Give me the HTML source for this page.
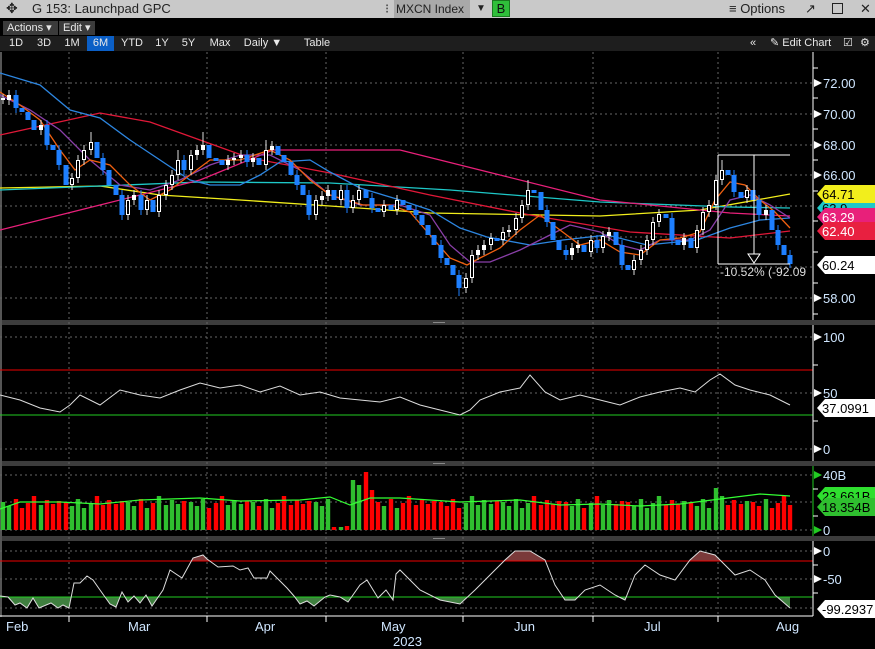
<!DOCTYPE html>
<html><head><meta charset="utf-8"><style>
*{margin:0;padding:0;box-sizing:border-box}
body{width:875px;height:649px;background:#000;overflow:hidden;font-family:"Liberation Sans",sans-serif;position:relative;color:#fff}
.top{position:absolute;left:0;top:0;width:875px;height:18px;background:#c9c9c9;color:#222;font-size:13px}
.top span{position:absolute;top:1px;white-space:nowrap}
.bar2{position:absolute;left:0;top:21px;height:14px;width:875px;background:#000}
.btn{position:absolute;top:0;height:14px;background:#3b3b3b;color:#e8e8e8;font-size:11px;line-height:14px;padding-left:4px}
.bar3{position:absolute;left:0;top:36px;height:15px;width:875px;background:#1e1e1e;font-size:11px;color:#e8e8e8}
.bar3 span{position:absolute;top:0;line-height:15px;text-align:center;white-space:nowrap}
svg{position:absolute;left:0;top:0}
</style></head><body>
<div class="top">
<span style="left:6px;top:0;font-size:14px">✥</span>
<span style="left:32px">G 153: Launchpad GPC</span>
<span style="left:385px;color:#333">⁝</span>
<span style="left:394px;top:0;height:18px;width:76px;background:#a9a9a9;padding:2px 2px;font-size:12px;overflow:hidden">MXCN Index</span>
<span style="left:476px;font-size:10px;top:3px">▼</span>
<span style="left:492px;top:0;width:18px;height:17px;background:#2fbf3a;border:1px solid #1a7a20;text-align:center;color:#111">B</span>
<span style="left:729px">≡ Options</span>
<span style="left:805px">↗</span>
<span style="left:832px;top:3px;width:11px;height:11px;border:1px solid #222"></span>
<span style="left:860px">✕</span>
</div>
<div class="bar2"><div class="btn" style="left:3px;width:55px">Actions ▾</div><div class="btn" style="left:59px;width:36px">Edit ▾</div></div>
<div class="bar3">
<span style="left:3px;width:26px">1D</span><span style="left:30px;width:28px">3D</span><span style="left:58px;width:28px">1M</span>
<span style="left:87px;width:27px;background:#0b5fc6">6M</span><span style="left:115px;width:34px">YTD</span><span style="left:149px;width:26px">1Y</span>
<span style="left:175px;width:27px">5Y</span><span style="left:203px;width:34px">Max</span><span style="left:238px;width:50px">Daily ▼</span>
<span style="left:292px;width:50px">Table</span>
<span style="left:750px">«</span><span style="left:770px">✎ Edit Chart</span><span style="left:843px">☑</span><span style="left:860px">⚙</span>
</div>
<svg width="875" height="649" viewBox="0 0 875 649">
<defs>
<clipPath id="cg"><rect x="0" y="597" width="813" height="20"/></clipPath>
<clipPath id="cr"><rect x="0" y="541" width="813" height="20"/></clipPath>
</defs>
<rect x="0" y="320" width="875" height="5" fill="#3c3c3c"/><rect x="433" y="322" width="12" height="1" fill="#888"/>
<rect x="0" y="461" width="875" height="5" fill="#3c3c3c"/><rect x="433" y="463" width="12" height="1" fill="#888"/>
<rect x="0" y="536" width="875" height="5" fill="#3c3c3c"/><rect x="433" y="538" width="12" height="1" fill="#888"/>
<rect x="0" y="52" width="2" height="565" fill="#555"/>
<g stroke="#666" stroke-dasharray="2,3">
<path d="M69 52V616M207 52V616M326 52V616M463 52V616M593 52V616M718 52V616"/>
<path d="M0 83H813M0 114H813M0 145H813M0 175H813M0 206H813M0 237H813M0 267H813M0 298H813"/>
<path d="M0 337H813M0 393H813M0 449H813M0 475H813M0 502H813M0 530H813M0 551H813M0 579H813M0 608H813"/>
</g>
<g fill="none" stroke-width="1.3">
<polyline stroke="#f2ee1c" points="0,188 100,186 160,195 240,200 330,206 430,213 600,216 700,210 790,194"/>
<polyline stroke="#1ec8c8" points="0,190 100,186 200,182 330,183 450,190 600,202 730,207 790,208"/>
<polyline stroke="#e8207a" points="0,230 100,205 200,180 273,150 330,150 400,150 500,175 600,200 730,213 790,216"/>
<polyline stroke="#e01838" points="0,135 100,113 150,122 200,140 250,158 330,173 430,195 530,215 630,232 730,238 790,231"/>
<polyline stroke="#2d86e0" points="0,73 40,85 70,110 100,118 130,140 160,160 190,180 210,185 240,185 260,175 280,162 310,160 330,172 360,188 400,200 430,210 460,228 487,237 530,245 563,240 607,235 647,245 697,240 730,228 760,220 790,218"/>
<polyline stroke="#8a3fa8" points="0,95 30,110 60,130 90,160 120,185 150,190 180,180 210,165 240,155 270,155 300,170 330,195 360,205 400,205 430,215 450,245 470,262 490,262 520,250 550,235 570,225 600,232 620,245 640,250 660,240 690,240 710,230 730,200 750,195 770,205 790,218"/>
<polyline stroke="#f06010" points="0,92 20,105 40,120 60,150 75,170 90,160 110,165 130,185 150,200 170,190 190,175 210,160 240,160 270,150 290,160 310,180 330,195 363,205 390,205 410,212 430,235 450,258 467,265 480,258 500,248 520,230 540,215 560,230 580,245 600,240 620,252 640,255 660,240 680,238 700,232 715,200 730,182 745,185 760,200 775,212 790,228"/>
</g>
<path fill="none" stroke="#ddd" stroke-width="1" d="M3 94V104M9 90V105M41 120V135M72 173V190M78 155V183M84 145V165M91 132V155M128 195V220M134 190V205M147 195V215M159 190V217M166 180V200M172 170V190M178 150V180M191 150V175M197 145V160M203 132V155M228 155V170M234 153V165M241 150V163M253 153V167M266 140V170M272 141V155M316 195V220M322 191V205M328 185V201M341 185V205M353 195V213M359 185V205M384 200V217M397 195V215M466 273V293M472 250V283M478 245V260M484 240V255M491 233V250M503 227V245M509 225V237M516 213V235M522 200V223M528 180V210M572 243V260M578 240V253M591 235V257M603 231V253M609 227V241M634 255V275M641 245V265M647 235V255M653 217V245M659 209V227M684 233V250M697 225V253M703 207V235M709 200V217M716 175V210M722 160V185M747 185V203M766 205V220"/>
<path fill="none" stroke="#1e7fff" stroke-width="1" d="M16 90V113M47 120V150M59 145V170M103 153V175M122 190V220M141 190V215M184 155V175M247 150V167M297 170V190M309 190V220M347 185V213M372 193V213M416 205V220M441 240V263M459 270V296M547 205V227M566 245V260M597 235V253M622 240V270M672 213V245M734 170V197M759 195V220M778 225V250M790 250V268"/>
<path fill="none" stroke="#1e7fff" stroke-width="5" d="M16 95V108M22 108V112M28 112V120M34 120V130M47 125V145M53 145V150M59 150V165M66 165V185M97 142V158M103 158V170M109 170V185M116 185V195M122 195V215M141 195V210M153 200V212M184 160V170M209 145V158M216 158V161M222 160V165M247 155V162M259 158V165M278 146V155M284 155V162M291 162V175M297 175V185M303 185V195M309 195V215M334 190V200M347 190V208M366 190V198M372 198V208M378 208V212M391 205V210M403 200V205M409 205V210M416 210V215M422 215V225M428 225V235M434 235V245M441 245V258M447 258V265M453 265V275M459 275V288M497 238V241M534 190V193M541 192V210M547 210V222M553 222V240M559 240V250M566 250V255M584 245V252M597 240V248M616 232V245M622 245V265M628 265V270M666 214V218M672 218V240M678 240V245M691 238V248M728 170V175M734 175V192M741 192V198M753 190V200M759 200V215M772 210V230M778 230V245M784 245V255M790 255V264"/>
<g fill="none">
<path stroke="#fff" stroke-width="4" d="M3 98V100M9 95V100M41 125V130M72 178V185M78 160V178M84 150V160M91 142V150M128 200V215M134 195V200M147 200V210M159 195V212M166 185V195M172 175V185M178 160V175M191 155V170M197 150V155M203 145V150M228 160V165M234 158V160M241 155V158M253 158V162M266 150V165M272 146V150M316 200V215M322 196V200M328 190V196M341 190V200M353 200V208M359 190V200M384 205V212M397 200V210M466 278V288M472 255V278M478 250V255M484 245V250M491 238V245M503 232V240M509 230V232M516 218V230M522 205V218M528 190V205M572 248V255M578 245V248M591 240V252M603 236V248M609 232V236M634 260V270M641 250V260M647 240V250M653 222V240M659 214V222M684 238V245M697 230V248M703 212V230M709 205V212M716 180V205M722 170V180M747 190V198M766 210V215"/>
<path stroke="#000" stroke-width="2" d="M72 179V184M78 161V177M84 151V159M91 143V149M128 201V214M147 201V209M159 196V211M166 186V194M172 176V184M178 161V174M191 156V169M266 151V164M316 201V214M341 191V199M353 201V207M359 191V199M384 206V211M397 201V209M466 279V287M472 256V277M491 239V244M503 233V239M516 219V229M522 206V217M528 191V204M591 241V251M603 237V247M634 261V269M641 251V259M647 241V249M653 223V239M659 215V221M697 231V247M703 213V229M709 206V211M716 181V204M722 171V179M747 191V197"/>
</g>
<path d="M718 155H790M754 155V254M718 264H790M718 155V264" stroke="#fff" fill="none"/>
<polygon points="748,254 760,254 754,263" fill="#000" stroke="#fff"/>
<text x="720" y="276" font-size="12" fill="#ddd">-10.52% (-92.09</text>
<line x1="0" y1="370" x2="813" y2="370" stroke="#e00"/><line x1="0" y1="415" x2="813" y2="415" stroke="#2c2"/>
<polyline fill="none" stroke="#ddd" points="0,395 20,400 40,408 60,412 70,405 80,395 100,405 120,390 140,395 160,398 180,390 200,383 220,388 240,385 260,392 280,386 300,395 320,392 340,398 360,400 380,402 400,397 420,405 440,410 460,415 470,410 480,400 500,392 520,388 530,375 545,392 560,400 580,395 600,400 620,405 640,397 660,392 680,388 695,392 710,380 720,374 735,385 750,390 770,395 790,405"/>
<path fill="none" stroke="#2fbf2f" stroke-width="4.4" d="M3 530V502M9 530V506M41 530V505M72 530V506M78 530V499M84 530V508M91 530V503M128 530V502M134 530V506M147 530V508M159 530V496M166 530V505M172 530V500M178 530V504M191 530V502M197 530V506M203 530V499M228 530V505M234 530V500M241 530V504M253 530V502M266 530V499M272 530V508M316 530V502M322 530V506M328 530V499M341 530V527M353 530V480M359 530V485M384 530V506M397 530V508M466 530V503M472 530V496M478 530V505M484 530V500M491 530V504M503 530V502M509 530V506M516 530V499M522 530V508M528 530V503M572 530V506M578 530V499M591 530V503M603 530V505M609 530V500M634 530V506M641 530V499M647 530V508M653 530V503M659 530V496M684 530V501M697 530V506M703 530V499M709 530V508M716 530V488M722 530V496M747 530V501M766 530V499"/>
<path fill="none" stroke="#f00" stroke-width="4.4" d="M16 530V499M22 530V508M28 530V503M34 530V496M47 530V500M53 530V504M59 530V501M66 530V502M97 530V496M103 530V505M109 530V500M116 530V504M122 530V501M141 530V499M153 530V503M184 530V501M209 530V508M216 530V503M222 530V496M247 530V501M259 530V506M278 530V503M284 530V496M291 530V505M297 530V500M303 530V504M309 530V501M334 530V527M347 530V526M366 530V472M372 530V490M378 530V502M391 530V499M403 530V503M409 530V496M416 530V505M422 530V500M428 530V504M434 530V501M441 530V502M447 530V506M453 530V499M459 530V508M497 530V501M534 530V496M541 530V505M547 530V500M553 530V504M559 530V501M566 530V502M584 530V508M597 530V496M616 530V504M622 530V501M628 530V502M666 530V505M672 530V500M678 530V504M691 530V502M728 530V505M734 530V500M741 530V504M753 530V502M759 530V506M772 530V508M778 530V503M784 530V496M790 530V505"/>
<polyline fill="none" stroke="#3f3" stroke-width="1.2" points="0,509 20,502 60,502 100,504 140,500 200,498 240,501 300,500 330,497 350,505 370,498 400,498 460,502 520,500 560,505 600,504 640,506 680,504 720,499 760,494 790,496"/>
<polygon clip-path="url(#cg)" fill="#3f7f3f" points="0,596 8,597 15,605 20,603 27,608 33,598 39,608 51,603 58,608 63,605 69,608 74,583 80,583 87,576 93,580 100,590 110,604 116,607 122,592 128,602 134,596 140,603 146,595 152,606 163,590 170,570 182,578 193,558 203,555 207,559 218,567 233,566 240,570 248,568 254,578 267,578 270,571 287,588 294,596 300,604 307,601 314,606 325,597 330,595 340,597 348,602 360,585 367,580 378,598 386,590 393,600 396,574 400,570 410,580 420,590 440,600 460,604 475,590 490,575 505,560 515,551 530,551 545,560 555,585 565,600 575,600 585,590 600,585 615,595 625,600 635,575 645,565 660,575 675,580 690,560 700,551 715,555 725,565 735,575 750,570 765,580 775,595 790,608 790,597 0,597"/>
<polygon clip-path="url(#cr)" fill="#7a3a3a" points="0,596 8,597 15,605 20,603 27,608 33,598 39,608 51,603 58,608 63,605 69,608 74,583 80,583 87,576 93,580 100,590 110,604 116,607 122,592 128,602 134,596 140,603 146,595 152,606 163,590 170,570 182,578 193,558 203,555 207,559 218,567 233,566 240,570 248,568 254,578 267,578 270,571 287,588 294,596 300,604 307,601 314,606 325,597 330,595 340,597 348,602 360,585 367,580 378,598 386,590 393,600 396,574 400,570 410,580 420,590 440,600 460,604 475,590 490,575 505,560 515,551 530,551 545,560 555,585 565,600 575,600 585,590 600,585 615,595 625,600 635,575 645,565 660,575 675,580 690,560 700,551 715,555 725,565 735,575 750,570 765,580 775,595 790,608 790,561 0,561"/>
<line x1="0" y1="561" x2="813" y2="561" stroke="#e00"/><line x1="0" y1="597" x2="813" y2="597" stroke="#2c2"/>
<polyline fill="none" stroke="#ddd" points="0,596 8,597 15,605 20,603 27,608 33,598 39,608 51,603 58,608 63,605 69,608 74,583 80,583 87,576 93,580 100,590 110,604 116,607 122,592 128,602 134,596 140,603 146,595 152,606 163,590 170,570 182,578 193,558 203,555 207,559 218,567 233,566 240,570 248,568 254,578 267,578 270,571 287,588 294,596 300,604 307,601 314,606 325,597 330,595 340,597 348,602 360,585 367,580 378,598 386,590 393,600 396,574 400,570 410,580 420,590 440,600 460,604 475,590 490,575 505,560 515,551 530,551 545,560 555,585 565,600 575,600 585,590 600,585 615,595 625,600 635,575 645,565 660,575 675,580 690,560 700,551 715,555 725,565 735,575 750,570 765,580 775,595 790,608"/>
<path d="M813 52V320M813 325V461M813 541V616M0 616H813" stroke="#fff"/>
<path d="M813 466V536" stroke="#2c2"/>
<path d="M813 98H818M813 129H818M813 160H818M813 191H818M813 221H818M813 252H818M813 283H818M813 314H818M813 68H818M813 365H818M813 421H818M813 489H818M813 516H818M813 565H818M813 593H818" stroke="#fff"/>
<g fill="#fff">
<polygon points="814,79 822,83 814,87"/><polygon points="814,110 822,114 814,118"/><polygon points="814,141 822,145 814,149"/><polygon points="814,171 822,175 814,179"/><polygon points="814,294 822,298 814,302"/>
<polygon points="814,333 822,337 814,341"/><polygon points="814,389 822,393 814,397"/><polygon points="814,445 822,449 814,453"/><polygon points="814,547 822,551 814,555"/><polygon points="814,575 822,579 814,583"/>
</g>
<polygon fill="#2c2" points="814,471 822,475 814,479"/><polygon fill="#2c2" points="814,526 822,530 814,534"/>
<g font-size="13" fill="#cfe6ff">
<text x="823" y="88">72.00</text><text x="823" y="119">70.00</text><text x="823" y="150">68.00</text><text x="823" y="180">66.00</text><text x="823" y="303">58.00</text>
<text x="823" y="342">100</text><text x="823" y="398">50</text><text x="823" y="454">0</text><text x="823" y="480">40B</text><text x="823" y="535">0</text><text x="823" y="556">0</text><text x="823" y="584">-50</text>
<text x="6" y="631">Feb</text><text x="128" y="631">Mar</text><text x="255" y="631">Apr</text><text x="381" y="631">May</text><text x="514" y="631">Jun</text><text x="644" y="631">Jul</text><text x="776" y="631">Aug</text>
<text x="393" y="646">2023</text>
</g>
<path d="M69 616V622M207 616V622M326 616V622M463 616V622M593 616V622M718 616V622" stroke="#fff"/>
<g font-size="13">
<polygon points="817,208 825,199 875,199 875,217 825,217" fill="#1ec8c8"/><text x="822" y="213" fill="#000">63.9</text>
<polygon points="817,194 825,185 875,185 875,203 825,203" fill="#f2ee1c"/><text x="822" y="199" fill="#000">64.71</text>
<polygon points="817,217 825,208 875,208 875,226 825,226" fill="#e8207a"/><text x="822" y="222" fill="#fff">63.29</text>
<polygon points="817,231 825,222 875,222 875,240 825,240" fill="#e82040"/><text x="822" y="236" fill="#fff">62.40</text>
<polygon points="817,265 825,256 875,256 875,274 825,274" fill="#fff"/><text x="822" y="270" fill="#000">60.24</text>
<polygon points="817,408 825,399 875,399 875,417 825,417" fill="#fff"/><text x="822" y="413" fill="#000">37.0991</text>
<polygon points="817,496 825,487 875,487 875,505 825,505" fill="#2fdf2f"/><text x="822" y="501" fill="#000">23.661B</text>
<polygon points="817,507 825,498 875,498 875,516 825,516" fill="#2fbf2f"/><text x="822" y="512" fill="#000">18.354B</text>
<polygon points="817,609 825,600 875,600 875,618 825,618" fill="#fff"/><text x="822" y="614" fill="#000">-99.2937</text>
</g>
</svg>
</body></html>
